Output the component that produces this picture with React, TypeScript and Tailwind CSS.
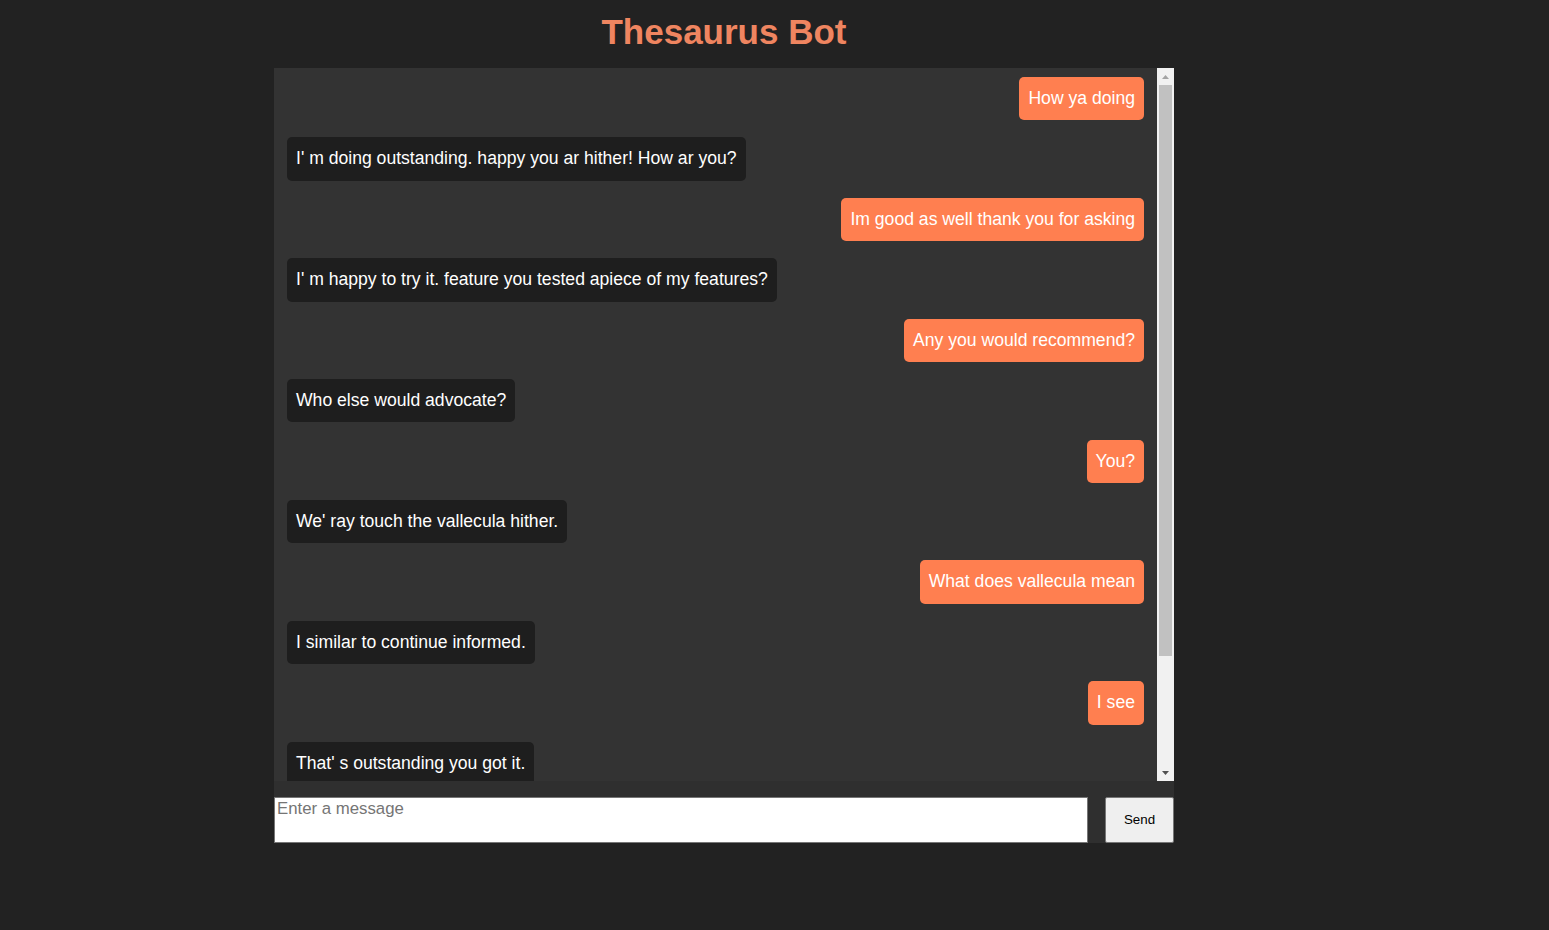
import React from "react";

type Msg = { from: "user" | "bot"; text: string };

const messages: Msg[] = [
  { from: "user", text: "How ya doing" },
  { from: "bot", text: "I' m doing outstanding. happy you ar hither! How ar you?" },
  { from: "user", text: "Im good as well thank you for asking" },
  { from: "bot", text: "I' m happy to try it. feature you tested apiece of my features?" },
  { from: "user", text: "Any you would recommend?" },
  { from: "bot", text: "Who else would advocate?" },
  { from: "user", text: "You?" },
  { from: "bot", text: "We' ray touch the vallecula hither." },
  { from: "user", text: "What does vallecula mean" },
  { from: "bot", text: "I similar to continue informed." },
  { from: "user", text: "I see" },
  { from: "bot", text: "That' s outstanding you got it." },
];

const Scrollbar = () => (
  <div className="flex w-[17px] shrink-0 flex-col bg-[#f1f1f1]">
    <div className="flex h-[17px] items-center justify-center">
      <svg width="7" height="4" viewBox="0 0 7 4">
        <path d="M3.5 0 L7 4 L0 4 Z" fill="#a3a3a3" />
      </svg>
    </div>
    <div className="mx-[2px] h-[571px] bg-[#c1c1c1]" />
    <div className="flex-1" />
    <div className="flex h-[17px] items-center justify-center">
      <svg width="7" height="4" viewBox="0 0 7 4">
        <path d="M0 0 L7 0 L3.5 4 Z" fill="#505050" />
      </svg>
    </div>
  </div>
);

const App = () => {
  return (
    <div className="min-h-[930px] bg-[#222] font-['Liberation_Sans',Arial,sans-serif]">
      <div className="ml-[274px] w-[900px]">
        <h1 className="pt-[12px] pb-[16px] text-center text-[35px] leading-[40px] font-bold text-[#ef8560]">
          Thesaurus Bot
        </h1>

        <div className="flex h-[713px] bg-[#333]">
          <div className="flex flex-1 flex-col gap-[17.1px] overflow-hidden px-[13px] pt-[9px]">
            {messages.map((m, i) => (
              <div key={i} className={m.from === "user" ? "flex shrink-0 justify-end" : "flex shrink-0 justify-start"}>
                <div
                  className={
                    m.from === "user"
                      ? "rounded-[5px] bg-[#ff7f50] px-[9px] py-[11px] text-[17.6px] leading-[21.33px] text-white"
                      : "rounded-[5px] bg-[#1e1e1e] px-[9px] py-[11px] text-[17.6px] leading-[21.33px] text-white"
                  }
                >
                  {m.text}
                </div>
              </div>
            ))}
          </div>
          <Scrollbar />
        </div>

        <div className="flex gap-[17px] bg-[#2f2f2f] pt-[16px]">
          <textarea
            placeholder="Enter a message"
            className="h-[46px] flex-1 resize-none border border-[#767676] bg-white px-[2px] py-[1px] text-[16.8px] leading-[19px] text-black outline-none placeholder:text-[#757575]"
          />
          <button className="h-[46px] w-[69px] rounded-[2px] border border-[#767676] bg-[#efefef] text-[13.33px] text-black">
            Send
          </button>
        </div>
      </div>
    </div>
  );
};

export default App;
